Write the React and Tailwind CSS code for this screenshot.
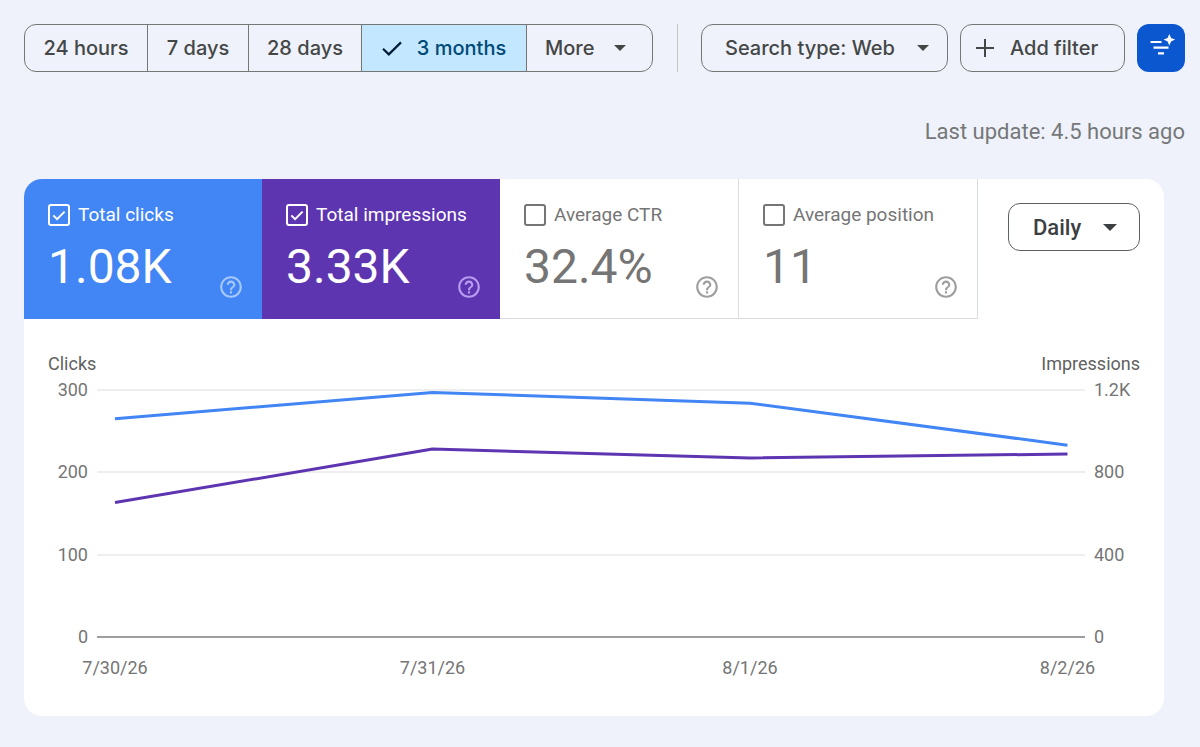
import React, { useState } from 'react';
import clsx from 'clsx';

const RANGES = [
  { id: '24h', label: '24 hours', width: 'w-[123px]' },
  { id: '7d', label: '7 days', width: 'w-[101px]' },
  { id: '28d', label: '28 days', width: 'w-[113px]' },
  { id: '3m', label: '3 months', width: 'w-[165px]' },
];

const METRICS = [
  { id: 'clicks', label: 'Total clicks', value: '1.08K', on: 'bg-[#4285f4] text-white', help: 'text-[#a6c8fc]' },
  { id: 'impressions', label: 'Total impressions', value: '3.33K', on: 'bg-[#5e35b1] text-white', help: 'text-[#b79df0]' },
  { id: 'ctr', label: 'Average CTR', value: '32.4%', on: 'bg-[#00897b] text-white', help: 'text-white/60' },
  { id: 'position', label: 'Average position', value: '11', on: 'bg-[#e8710a] text-white', help: 'text-white/60' },
];

const DATA = [
  { date: '7/30/26', clicks: 265, impressions: 653 },
  { date: '7/31/26', clicks: 297, impressions: 913 },
  { date: '8/1/26', clicks: 284, impressions: 870 },
  { date: '8/2/26', clicks: 233, impressions: 889 },
];

const TICKS = [
  { left: '300', right: '1.2K', y: 14 },
  { left: '200', right: '800', y: 96 },
  { left: '100', right: '400', y: 179 },
  { left: '0', right: '0', y: 261 },
];

const BASE_Y = 261;
const PLOT_H = 247;

function Caret({ className }) {
  return (
    <svg viewBox="0 0 12 6" className={className} fill="currentColor" aria-hidden="true">
      <path d="M0 0h12L6 6z"/>
    </svg>
  );
}

function CheckIcon() {
  return (
    <svg viewBox="0 0 20 15" className="h-[15px] w-5" fill="none" stroke="#001d35" strokeWidth="2.2" aria-hidden="true">
      <path d="M1 7.8l5.8 5.6L19 1.4"/>
    </svg>
  );
}

function PlusIcon() {
  return (
    <svg viewBox="0 0 18 18" className="size-[18px]" fill="none" stroke="currentColor" strokeWidth="2" aria-hidden="true">
      <path d="M9 0v18M0 9h18"/>
    </svg>
  );
}

function SmartFilterIcon() {
  return (
    <svg viewBox="0 0 48 48" className="size-12" aria-hidden="true">
      <path d="M13.5 18h11M16.5 23.7h15M21 29.4h6" fill="none" stroke="#fff" strokeWidth="2.2"/>
      <path d="M32.3 9.9l1.8 4 4 1.7-4 1.8-1.8 4-1.7-4-4-1.8 4-1.7z" fill="#fff"/>
    </svg>
  );
}

function HelpIcon() {
  return (
    <svg viewBox="0 0 24 24" className="size-[26px]" fill="currentColor" aria-hidden="true">
      <path d="M11 18h2v-2h-2v2zm1-16C6.48 2 2 6.48 2 12s4.48 10 10 10 10-4.48 10-10S17.52 2 12 2zm0 18c-4.41 0-8-3.59-8-8s3.59-8 8-8 8 3.59 8 8-3.59 8-8 8zm0-14c-2.21 0-4 1.79-4 4h2c0-1.1.9-2 2-2s2 .9 2 2c0 2-3 1.75-3 5h2c0-2.25 3-2.5 3-5 0-2.21-1.79-4-4-4z"/>
    </svg>
  );
}

function Toolbar() {
  const [range, setRange] = useState('3m');
  const outlined = 'flex h-12 items-center rounded-xl border border-[#747775]';

  return (
    <div className="flex items-center justify-between font-['Inter',sans-serif] text-xl font-medium whitespace-nowrap text-[#444746]">
      <div className="flex h-12 overflow-hidden rounded-xl border border-[#747775]">
        {RANGES.map(r => (
          <button
            key={r.id}
            onClick={() => setRange(r.id)}
            aria-pressed={range === r.id}
            className={clsx(
              'flex items-center justify-center gap-[15px] border-r border-[#747775]',
              r.width,
              range === r.id && 'bg-[#c2e7ff] text-[#004a77]'
            )}
          >
            {range === r.id && <CheckIcon/>}
            {r.label}
          </button>
        ))}
        <button className="flex w-[125px] items-center gap-5 pl-[18px]">
          More <Caret className="h-[6px] w-3"/>
        </button>
      </div>
      <div className="h-12 w-px bg-[#c4c7c5]"/>
      <div className="flex gap-3">
        <button className={clsx(outlined, 'w-[247px] justify-between pr-[18px] pl-[23px]')}>
          Search type: Web <Caret className="h-[6px] w-3"/>
        </button>
        <button className={clsx(outlined, 'w-[165px] gap-4 pl-[15px]')}>
          <PlusIcon/> Add filter
        </button>
        <button aria-label="Smart filter" className="size-12 rounded-xl bg-[#0b57d0]">
          <SmartFilterIcon/>
        </button>
      </div>
    </div>
  );
}

function MetricTile({ metric, checked, onToggle }) {
  return (
    <div className={clsx(
      'flex flex-1 flex-col px-6 pt-6 pb-[18px]',
      checked ? metric.on : 'border-r border-b border-[#dadce0] text-[#757575]'
    )}>
      <label htmlFor={metric.id} className="flex h-6 items-center gap-2 text-[19px] whitespace-nowrap">
        <span className="grid size-[22px] place-items-center">
          <input
            id={metric.id}
            type="checkbox"
            checked={checked}
            onChange={onToggle}
            className="col-start-1 row-start-1 size-[22px] appearance-none rounded-[3px] border-2 border-current"
          />
          {checked && (
            <svg viewBox="0 0 14 11" className="pointer-events-none col-start-1 row-start-1 h-[11px] w-[14px]" fill="none" stroke="currentColor" strokeWidth="2">
              <path d="M1.3 5.4l3.8 3.8 7.5-7.6"/>
            </svg>
          )}
        </span>
        {metric.label}
      </label>
      <div className="mt-3 flex h-[61px] justify-between">
        <span className="text-5xl leading-[56px]">{metric.value}</span>
        <button
          aria-label={`About ${metric.label}`}
          className={clsx('-mr-[6px] self-end', checked ? metric.help : 'text-[#9e9e9e]')}
        >
          <HelpIcon/>
        </button>
      </div>
    </div>
  );
}

function Chart({ active }) {
  const x = i => 91 + i * 317.5;
  const line = (key, max) => DATA.map((d, i) => `${x(i)},${BASE_Y - (d[key] / max) * PLOT_H}`).join(' ');

  return (
    <svg viewBox="0 0 1140 316" className="block w-full" role="img" aria-label="Clicks and impressions by day">
      {TICKS.map(t => (
        <g key={t.y} fill="#757575" fontSize="18">
          <rect x="73" y={t.y - 1} width="988" height="2" fill={t.left === '0' ? '#9e9e9e' : '#eeeeee'}/>
          <text x="64" y={t.y + 6} textAnchor="end">{t.left}</text>
          <text x="1070" y={t.y + 6}>{t.right}</text>
        </g>
      ))}
      {DATA.map((d, i) => (
        <text key={d.date} x={x(i)} y="298" textAnchor="middle" fontSize="18" fill="#757575">{d.date}</text>
      ))}
      <g fill="none" strokeWidth="3" strokeLinejoin="round">
        {active.clicks && <polyline points={line('clicks', 300)} stroke="#4285f4"/>}
        {active.impressions && <polyline points={line('impressions', 1200)} stroke="#5e35b1"/>}
      </g>
    </svg>
  );
}

export default function App() {
  const [active, setActive] = useState({ clicks: true, impressions: true });

  return (
    <div className="min-h-screen bg-[#eff2fa] pt-6 pb-8 pl-6 font-['Roboto',sans-serif]">
      <div className="pr-[15px]">
        <Toolbar/>
        <p className="mt-[45px] text-right text-[22px] leading-[30px] text-[#757779]">Last update: 4.5 hours ago</p>
      </div>

      <div className="mt-8 mr-9 overflow-hidden rounded-[18px] bg-white pb-6">
        <div className="flex">
          {METRICS.map(m => (
            <MetricTile
              key={m.id}
              metric={m}
              checked={!!active[m.id]}
              onToggle={() => setActive(a => ({ ...a, [m.id]: !a[m.id] }))}
            />
          ))}
          <div className="flex w-[186px] justify-end pt-6 pr-6">
            <button className="flex h-12 w-[132px] items-center justify-between rounded-xl border border-[#5f6160] pr-[22px] pl-6 text-[22px] font-medium text-[#3c4043]">
              Daily <Caret className="h-[7px] w-[14px]"/>
            </button>
          </div>
        </div>

        <div className="mt-[33px] flex justify-between px-6 text-lg leading-6 text-[#616161]">
          <span>Clicks</span>
          <span>Impressions</span>
        </div>
        <Chart active={active}/>
      </div>
    </div>
  );
}
